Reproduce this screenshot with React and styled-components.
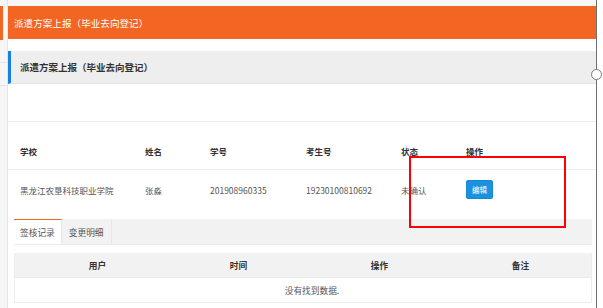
import React from "react";
import styled, { createGlobalStyle } from "styled-components";

const GlobalStyle = createGlobalStyle`
  html, body {
    margin: 0;
    padding: 0;
    background: #fff;
  }
  body {
    font-family: "Noto Sans CJK SC", "Noto Sans", sans-serif;
  }
`;

const Page = styled.div`
  position: relative;
  display: flex;
  width: 603px;
  height: 308px;
  overflow: hidden;
  background: #fff;
`;

const SideStrip = styled.div`
  width: 7px;
  flex: none;
  background: #f6f6f6;
  border-right: 1px solid #e6e6e6;
  display: flex;
  flex-direction: column;

  .accent {
    margin-top: 6px;
    width: 3px;
    height: 34px;
    background: #f26522;
  }
  .line {
    height: 1px;
    background: #e4e4e4;
    margin-top: 22px;
  }
`;

const Main = styled.div`
  width: 588px;
  flex: none;
  display: flex;
  flex-direction: column;
  background: #fff;
  padding-top: 6px;
  box-shadow: inset 0 6px 0 #f6f6f6;
`;

const TitleBar = styled.div`
  height: 33px;
  flex: none;
  display: flex;
  align-items: center;
  padding-left: 6px;
  background: #f26522;
  color: #fff;
  font-size: 9.6px;
`;

const SectionHead = styled.div`
  margin-top: 12px;
  height: 32px;
  flex: none;
  display: flex;
  align-items: center;
  padding-left: 9px;
  background: #eeeeee;
  border-left: 3px solid #1681e2;
  border-bottom: 1px solid #e4e4e4;
  color: #333;
  font-size: 9.5px;
  font-weight: 700;
`;

const Blank = styled.div`
  height: 37px;
  flex: none;
  border-bottom: 1px solid #ededed;
`;

const InfoRow = styled.div`
  display: grid;
  flex: none;
  grid-template-columns: 125px 65px 96px 95px 65px 1fr;
  padding-left: 12px;
  box-sizing: border-box;
  height: ${(p) => (p.$head ? "48px" : "39px")};
  align-items: ${(p) => (p.$head ? "end" : "center")};
  padding-bottom: ${(p) => (p.$head ? "12px" : "0")};
  border-bottom: ${(p) => (p.$head ? "1px solid #ececec" : "none")};
  font-size: 8.5px;
  color: ${(p) => (p.$head ? "#333" : "#555")};
  font-weight: ${(p) => (p.$head ? 700 : 400)};
`;

const HeadCell = styled.span`
  line-height: 12px;
`;

const EditButton = styled.button`
  width: 27px;
  height: 19px;
  padding: 0;
  border: 1px solid #1788d6;
  border-radius: 2px;
  background: #1a92dd;
  color: #fff;
  font-family: inherit;
  font-size: 7.5px;
`;

const Tabs = styled.div`
  margin: 10px 4px 0 6px;
  height: 25px;
  flex: none;
  display: flex;
  background: #f2f2f2;
  border-bottom: 1px solid #ececec;
`;

const Tab = styled.div`
  display: flex;
  align-items: center;
  justify-content: center;
  height: 100%;
  box-sizing: border-box;
  padding: 0 ${(p) => (p.$active ? "6px" : "7px")};
  font-size: 8.7px;
  color: #555;
  background: ${(p) => (p.$active ? "#fff" : "transparent")};
  border-top: 1px solid ${(p) => (p.$active ? "#f26522" : "transparent")};
  border-right: 1px solid #e6e6e6;
`;

const RecordTable = styled.div`
  margin: 8px 4px 0 6px;
  flex: none;
  border: 1px solid #ededed;
  border-top: none;
`;

const RecordHead = styled.div`
  display: grid;
  grid-template-columns: repeat(4, 1fr);
  height: 24px;
  align-items: center;
  padding-left: 12px;
  background: #f2f2f2;
  border-bottom: 1px solid #ebebeb;
  font-size: 8.7px;
  font-weight: 700;
  color: #333;

  span {
    text-align: center;
  }
`;

const EmptyRow = styled.div`
  height: 24px;
  display: flex;
  align-items: center;
  justify-content: center;
  padding-left: 18px;
  font-size: 8.7px;
  color: #555;
`;

const Divider = styled.div`
  width: 1px;
  flex: none;
  background: #6f6f6f;
`;

const Handle = styled.div`
  position: absolute;
  left: 591px;
  top: 69px;
  width: 9px;
  height: 9px;
  border-radius: 50%;
  background: #fff;
  border: 1px solid #7a7a7a;
`;

const Highlight = styled.div`
  position: absolute;
  left: 409px;
  top: 156px;
  width: 153px;
  height: 68px;
  border: 2px solid #ff0000;
`;

const headers = ["学校", "姓名", "学号", "考生号", "状态", "操作"];

export default function App() {
  return (
    <>
      <GlobalStyle />
      <Page>
        <SideStrip>
          <div className="accent" />
          <div className="line" />
          <div className="line" />
        </SideStrip>
        <Main>
          <TitleBar>派遣方案上报（毕业去向登记）</TitleBar>
          <SectionHead>派遣方案上报（毕业去向登记）</SectionHead>
          <Blank />
          <InfoRow $head>
            {headers.map((h) => (
              <HeadCell key={h}>{h}</HeadCell>
            ))}
          </InfoRow>
          <InfoRow>
            <span>黑龙江农垦科技职业学院</span>
            <span>张淼</span>
            <span>201908960335</span>
            <span>19230100810692</span>
            <span>未确认</span>
            <span>
              <EditButton>编辑</EditButton>
            </span>
          </InfoRow>
          <Tabs>
            <Tab $active>签核记录</Tab>
            <Tab>变更明细</Tab>
          </Tabs>
          <RecordTable>
            <RecordHead>
              <span>用户</span>
              <span>时间</span>
              <span>操作</span>
              <span>备注</span>
            </RecordHead>
            <EmptyRow>没有找到数据.</EmptyRow>
          </RecordTable>
        </Main>
        <Divider />
        <Handle />
        <Highlight />
      </Page>
    </>
  );
}
